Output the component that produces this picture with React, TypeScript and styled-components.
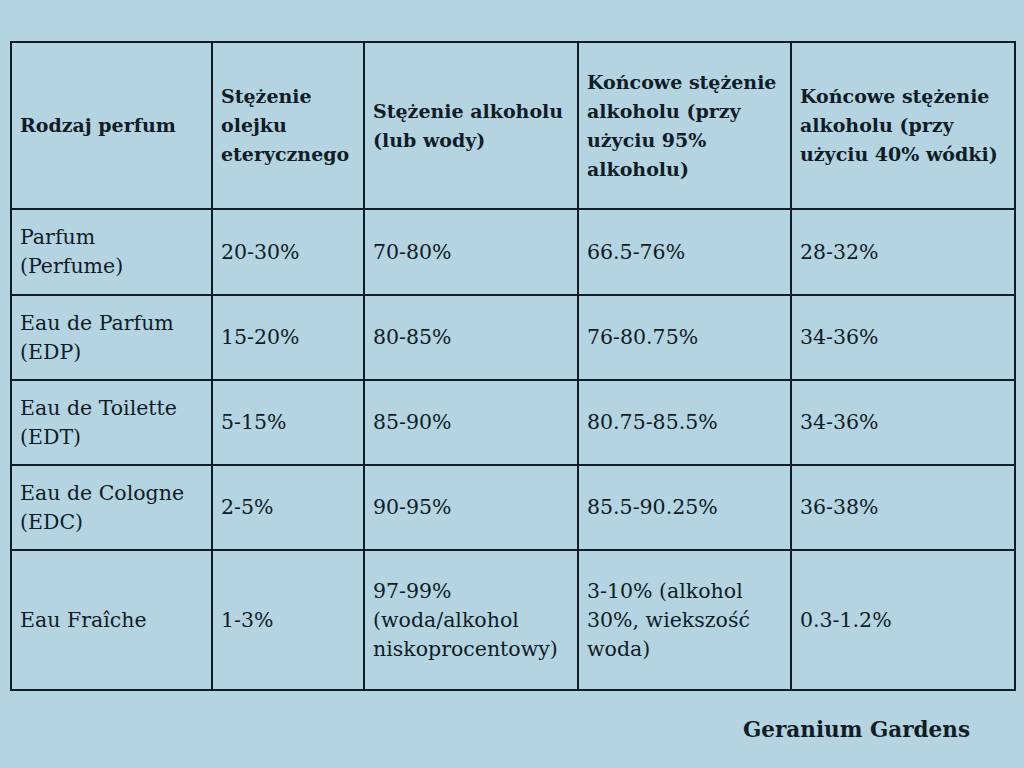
import styled, { createGlobalStyle } from 'styled-components';

const GlobalStyle = createGlobalStyle`
  html, body {
    margin: 0;
    padding: 0;
    background: #b3d4e0;
  }
  body {
    font-family: 'DejaVu Serif', 'Liberation Serif', serif;
    color: #101c26;
  }
`;

const COLUMNS = [201, 152, 214, 213, 224];
const HEADERS = [
  'Rodzaj perfum',
  'Stężenie olejku eterycznego',
  'Stężenie alkoholu (lub wody)',
  'Końcowe stężenie alkoholu (przy użyciu 95% alkoholu)',
  'Końcowe stężenie alkoholu (przy użyciu 40% wódki)',
];

const ROWS: { height: number; cells: string[] }[] = [
  { height: 86, cells: ['Parfum (Perfume)', '20-30%', '70-80%', '66.5-76%', '28-32%'] },
  { height: 85, cells: ['Eau de Parfum (EDP)', '15-20%', '80-85%', '76-80.75%', '34-36%'] },
  { height: 85, cells: ['Eau de Toilette (EDT)', '5-15%', '85-90%', '80.75-85.5%', '34-36%'] },
  { height: 85, cells: ['Eau de Cologne (EDC)', '2-5%', '90-95%', '85.5-90.25%', '36-38%'] },
  {
    height: 140,
    cells: [
      'Eau Fraîche',
      '1-3%',
      '97-99% (woda/alkohol niskoprocentowy)',
      '3-10% (alkohol 30%, wiekszość woda)',
      '0.3-1.2%',
    ],
  },
];

export default function App() {
  return (
    <Page>
      <GlobalStyle />
      <Table>
        <colgroup>
          {COLUMNS.map((w, i) => (
            <col key={i} style={{ width: w }} />
          ))}
        </colgroup>
        <thead>
          <Row $height={167}>
            {HEADERS.map((h, i) => (
              <HeadCell key={i}>{h}</HeadCell>
            ))}
          </Row>
        </thead>
        <tbody>
          {ROWS.map((row, r) => (
            <Row key={r} $height={row.height}>
              {row.cells.map((c, i) => (
                <Cell key={i}>{c}</Cell>
              ))}
            </Row>
          ))}
        </tbody>
      </Table>
      <Footer>Geranium Gardens</Footer>
    </Page>
  );
}

const Page = styled.div`
  width: 1024px;
  height: 768px;
  box-sizing: border-box;
  padding: 41px 10px 0 10px;
  display: flex;
  flex-direction: column;
`;

const Table = styled.table`
  width: 1004px;
  table-layout: fixed;
  border-collapse: collapse;
  border: 2px solid #101c26;
`;

const Row = styled.tr<{ $height: number }>`
  height: ${(p) => p.$height}px;
`;

const Cell = styled.td`
  border: 2px solid #101c26;
  padding: 0 7px 0 8px;
  vertical-align: middle;
  font-size: 20.5px;
  line-height: 29px;
  font-weight: 400;
  text-align: left;
`;

const HeadCell = styled(Cell).attrs({ as: 'th' })`
  font-size: 19px;
  font-weight: 700;
`;

const Footer = styled.div`
  align-self: flex-end;
  margin: 26px 44px 0 0;
  font-size: 21.5px;
  font-weight: 700;
`;
